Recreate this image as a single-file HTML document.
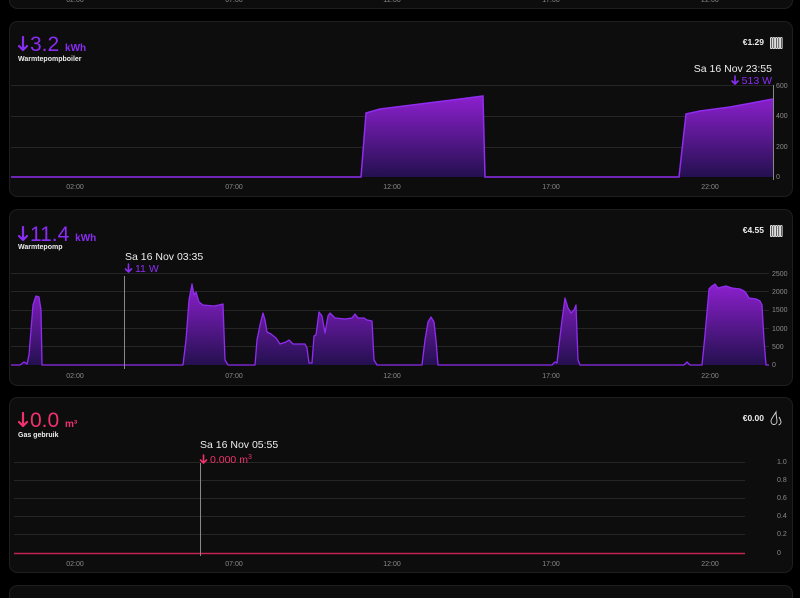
<!DOCTYPE html>
<html><head><meta charset="utf-8"><style>
html,body{margin:0;padding:0;background:#000;width:800px;height:598px;overflow:hidden}
svg{display:block;font-family:"Liberation Sans",sans-serif}
</style></head><body>
<svg width="800" height="598" viewBox="0 0 800 598" xmlns="http://www.w3.org/2000/svg">
<defs>
<linearGradient id="pg2" x1="0" y1="273" x2="0" y2="365" gradientUnits="userSpaceOnUse">
<stop offset="0" stop-color="#9b22e0"/><stop offset="1" stop-color="#24104f"/>
</linearGradient>
<linearGradient id="pg1" x1="0" y1="85" x2="0" y2="177" gradientUnits="userSpaceOnUse">
<stop offset="0" stop-color="#9b22e0"/><stop offset="1" stop-color="#24104f"/>
</linearGradient>
<g id="rad" fill="none" stroke="#ddd" stroke-width="1">
<rect x="0.5" y="0.5" width="1.6" height="11" rx="0.8"/><rect x="3" y="0.5" width="1.6" height="11" rx="0.8"/><rect x="5.5" y="0.5" width="1.6" height="11" rx="0.8"/><rect x="8" y="0.5" width="1.6" height="11" rx="0.8"/><rect x="10.5" y="0.5" width="1.6" height="11" rx="0.8"/>
</g>
<path id="arr" d="M0,0 L0,13 M-4,9 L0,13 L4,9" fill="none" stroke-width="2.2" stroke-linecap="round" stroke-linejoin="round"/>
<path id="sarr" d="M0,0 L0,7.5 M-3,5 L0,8 L3,5" fill="none" stroke-width="1.6" stroke-linecap="round" stroke-linejoin="round"/>
</defs>
<rect x="9.5" y="-20" width="783" height="28.5" rx="8" fill="#0d0d0d" stroke="#1f1f1f"/>
<rect x="9.5" y="21.5" width="783" height="175" rx="8" fill="#0d0d0d" stroke="#1f1f1f"/>
<rect x="9.5" y="209.5" width="783" height="176" rx="8" fill="#0d0d0d" stroke="#1f1f1f"/>
<rect x="9.5" y="397.5" width="783" height="175" rx="8" fill="#0d0d0d" stroke="#1f1f1f"/>
<rect x="9.5" y="585.5" width="783" height="40" rx="8" fill="#0d0d0d" stroke="#1f1f1f"/>
<g font-size="7" fill="#8a8a8a" text-anchor="middle">
<text x="75" y="2">02:00</text><text x="234" y="2">07:00</text><text x="392" y="2">12:00</text><text x="551" y="2">17:00</text><text x="710" y="2">22:00</text>
</g>

<!-- CARD 2 -->
<use href="#arr" x="23" y="37" stroke="#8b2cf5"/>
<text x="30" y="51" font-size="21" fill="#8b2cf5">3.2 <tspan font-size="10" font-weight="bold">kWh</tspan></text>
<text x="18" y="61" font-size="7" font-weight="bold" fill="#eee">Warmtepompboiler</text>
<text x="764" y="45" font-size="8.5" font-weight="bold" fill="#eee" text-anchor="end">€1.29</text>
<use href="#rad" x="770" y="37"/>
<g stroke="#262626" stroke-width="1">
<line x1="11" y1="85.5" x2="773" y2="85.5"/><line x1="11" y1="116.5" x2="773" y2="116.5"/><line x1="11" y1="147.5" x2="773" y2="147.5"/>
</g>
<path d="M11,177 L361,177 L366,113 L380,109 L420,104 L460,99 L483,96 L485,177 L679,177 L686,114 L700,111 L730,107 L773,99 L773,177 Z" fill="url(#pg1)"/>
<path d="M11,177 L361,177 L366,113 L380,109 L420,104 L460,99 L483,96 L485,177 L679,177 L686,114 L700,111 L730,107 L773,99" fill="none" stroke="#8f2cf0" stroke-width="1.5"/>
<line x1="773.5" y1="85" x2="773.5" y2="180" stroke="#888"/>
<g font-size="7" fill="#8a8a8a"><text x="776" y="88">600</text><text x="776" y="118">400</text><text x="776" y="149">200</text><text x="776" y="179">0</text></g>
<text x="772" y="72" font-size="10.5" fill="#eee" text-anchor="end">Sa 16 Nov 23:55</text>
<use href="#sarr" x="735" y="76" stroke="#8b2cf5"/>
<text x="772" y="84" font-size="10.5" fill="#8b2cf5" text-anchor="end">513 W</text>
<g font-size="7" fill="#8a8a8a" text-anchor="middle">
<text x="75" y="189">02:00</text><text x="234" y="189">07:00</text><text x="392" y="189">12:00</text><text x="551" y="189">17:00</text><text x="710" y="189">22:00</text>
</g>

<!-- CARD 3 -->
<use href="#arr" x="23" y="227" stroke="#8b2cf5"/>
<text x="30" y="241" font-size="21" fill="#8b2cf5">11.4 <tspan font-size="10" font-weight="bold">kWh</tspan></text>
<text x="18" y="249" font-size="7" font-weight="bold" fill="#eee">Warmtepomp</text>
<text x="764" y="233" font-size="8.5" font-weight="bold" fill="#eee" text-anchor="end">€4.55</text>
<use href="#rad" x="770" y="225"/>
<g stroke="#262626" stroke-width="1">
<line x1="11" y1="273.5" x2="769" y2="273.5"/><line x1="11" y1="291.5" x2="769" y2="291.5"/><line x1="11" y1="310.5" x2="769" y2="310.5"/><line x1="11" y1="328.5" x2="769" y2="328.5"/><line x1="11" y1="346.5" x2="769" y2="346.5"/>
</g>
<path d="M11,365 L20,365 L24,362 L27,364 L29,355 L33,305 L36,296 L39,297 L41,310 L42,365 L183,365 L186,340 L189,300 L192,284 L194,295 L196,292 L199,302 L203,305 L214,306 L219,305 L223,304 L225,360 L228,365 L255,365 L257,340 L260,325 L263,313 L265,320 L267,332 L271,334 L276,338 L280,344 L286,342 L289,340 L293,344 L305,344 L307,348 L309,363 L312,363 L314,336 L316,335 L319,312 L322,316 L325,333 L328,316 L330,313 L335,318 L345,319 L352,318 L355,314 L358,318 L364,318 L367,320 L372,321 L374,360 L377,365 L422,365 L425,340 L428,322 L431,317 L434,322 L436,340 L438,365 L552,365 L555,362 L557,363 L559,345 L562,320 L565,298 L568,308 L571,313 L574,310 L576,305 L578,360 L580,365 L684,365 L687,362 L690,365 L702,365 L705,335 L709,289 L712,286 L715,284 L718,288 L722,287 L726,286 L732,288 L740,289 L744,291 L746,293 L749,298 L756,299 L760,301 L762,305 L764,340 L766,365 L769,365 Z" fill="url(#pg2)"/>
<path d="M11,365 L20,365 L24,362 L27,364 L29,355 L33,305 L36,296 L39,297 L41,310 L42,365 L183,365 L186,340 L189,300 L192,284 L194,295 L196,292 L199,302 L203,305 L214,306 L219,305 L223,304 L225,360 L228,365 L255,365 L257,340 L260,325 L263,313 L265,320 L267,332 L271,334 L276,338 L280,344 L286,342 L289,340 L293,344 L305,344 L307,348 L309,363 L312,363 L314,336 L316,335 L319,312 L322,316 L325,333 L328,316 L330,313 L335,318 L345,319 L352,318 L355,314 L358,318 L364,318 L367,320 L372,321 L374,360 L377,365 L422,365 L425,340 L428,322 L431,317 L434,322 L436,340 L438,365 L552,365 L555,362 L557,363 L559,345 L562,320 L565,298 L568,308 L571,313 L574,310 L576,305 L578,360 L580,365 L684,365 L687,362 L690,365 L702,365 L705,335 L709,289 L712,286 L715,284 L718,288 L722,287 L726,286 L732,288 L740,289 L744,291 L746,293 L749,298 L756,299 L760,301 L762,305 L764,340 L766,365 L769,365" fill="none" stroke="#8f2cf0" stroke-width="1.3" stroke-linejoin="round"/>
<line x1="124.5" y1="276" x2="124.5" y2="369" stroke="#888"/>
<g font-size="7" fill="#8a8a8a"><text x="772" y="276">2500</text><text x="772" y="294">2000</text><text x="772" y="312">1500</text><text x="772" y="331">1000</text><text x="772" y="349">500</text><text x="772" y="367">0</text></g>
<text x="125" y="260" font-size="10.5" fill="#eee">Sa 16 Nov 03:35</text>
<use href="#sarr" x="128.5" y="264" stroke="#8b2cf5"/>
<text x="135" y="272" font-size="10.5" fill="#8b2cf5">11 W</text>
<g font-size="7" fill="#8a8a8a" text-anchor="middle">
<text x="75" y="378">02:00</text><text x="234" y="378">07:00</text><text x="392" y="378">12:00</text><text x="551" y="378">17:00</text><text x="710" y="378">22:00</text>
</g>

<!-- CARD 4 -->
<use href="#arr" x="23" y="413" stroke="#f0316e"/>
<text x="30" y="427" font-size="21" fill="#f0316e">0.0 <tspan font-size="10" font-weight="bold">m³</tspan></text>
<text x="18" y="437" font-size="7" font-weight="bold" fill="#eee">Gas gebruik</text>
<text x="764" y="421" font-size="8.5" font-weight="bold" fill="#eee" text-anchor="end">€0.00</text>
<g fill="none" stroke="#ddd" stroke-width="0.9">
<path d="M776,412 C773,417 771,419 771,421 C771,423.5 772.5,424.5 774,424.5 C775.8,424.5 777,423 777,421 C777,419 776,416 776,412 Z"/>
<path d="M779,417 C780,419 781,420.5 781,422 C781,423.5 780,424.5 778.5,425"/>
</g>
<g stroke="#262626" stroke-width="1">
<line x1="14" y1="462.5" x2="745" y2="462.5"/><line x1="14" y1="480.5" x2="745" y2="480.5"/><line x1="14" y1="498.5" x2="745" y2="498.5"/><line x1="14" y1="516.5" x2="745" y2="516.5"/><line x1="14" y1="534.5" x2="745" y2="534.5"/>
</g>
<line x1="14" y1="553.5" x2="745" y2="553.5" stroke="#c2234f" stroke-width="1.5"/>
<line x1="200.5" y1="463" x2="200.5" y2="556" stroke="#888"/>
<g font-size="7" fill="#8a8a8a"><text x="777" y="464">1.0</text><text x="777" y="482">0.8</text><text x="777" y="500">0.6</text><text x="777" y="518">0.4</text><text x="777" y="536">0.2</text><text x="777" y="555">0</text></g>
<text x="200" y="448" font-size="10.5" fill="#eee">Sa 16 Nov 05:55</text>
<use href="#sarr" x="203.5" y="455" stroke="#f0316e"/>
<text x="210" y="463" font-size="10.5" fill="#f0316e">0.000 m<tspan font-size="7" dy="-4">3</tspan></text>
<g font-size="7" fill="#8a8a8a" text-anchor="middle">
<text x="75" y="566">02:00</text><text x="234" y="566">07:00</text><text x="392" y="566">12:00</text><text x="551" y="566">17:00</text><text x="710" y="566">22:00</text>
</g>
</svg>
</body></html>
